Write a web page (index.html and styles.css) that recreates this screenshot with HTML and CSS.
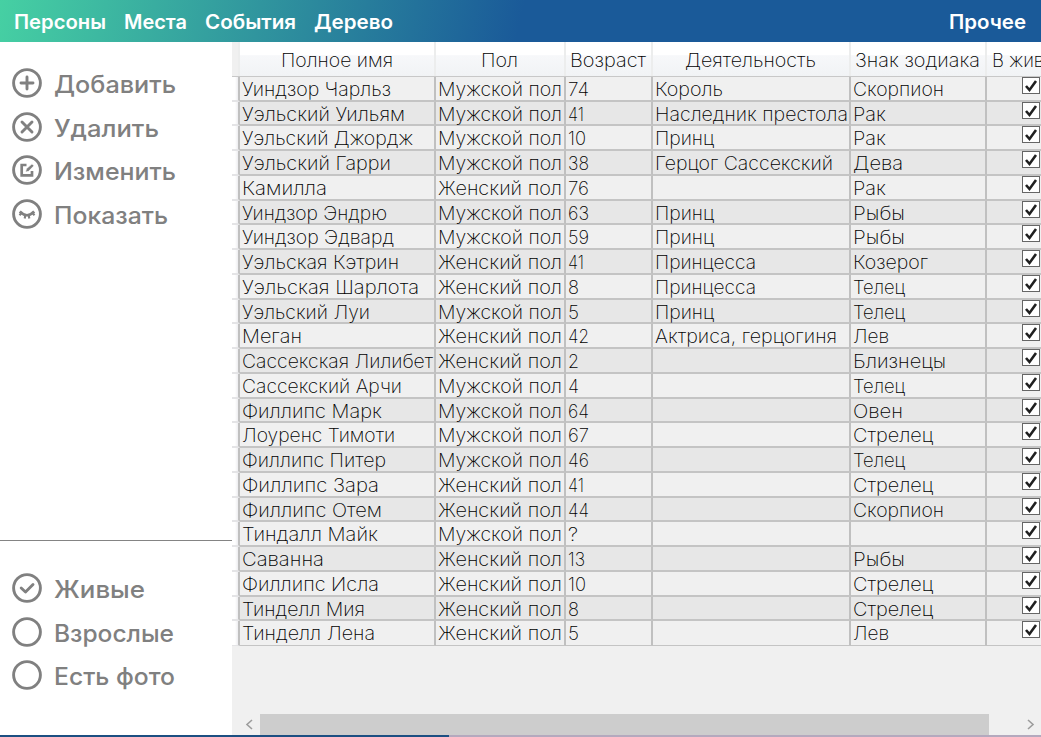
FILE: index.html
```html
<!DOCTYPE html>
<html lang="ru">
<head>
<meta charset="utf-8">
<title>Персоны</title>
<link rel="stylesheet" href="styles.css">
</head>
<body>
<div class="app">
  <nav class="topbar">
    <a class="tab" data-w="92">Персоны</a>
    <a class="tab" data-w="63">Места</a>
    <a class="tab" data-w="91">События</a>
    <a class="tab" data-w="79">Дерево</a>
    <a class="tab tab-more" data-w="77">Прочее</a>
  </nav>
  <div class="main">
    <aside class="side">
      <div class="group actions">
        <div class="item"><svg class="icon" viewBox="0 0 30 30"><circle cx="15" cy="15" r="13.4"/><path d="M15 9v12M9 15h12"/></svg><span class="label" data-w="122">Добавить</span></div>
        <div class="item"><svg class="icon" viewBox="0 0 30 30"><circle cx="15" cy="15" r="13.4"/><path d="M10 10l10 10M20 10l-10 10"/></svg><span class="label" data-w="105">Удалить</span></div>
        <div class="item"><svg class="icon" viewBox="0 0 30 30"><circle cx="15" cy="15" r="13.4"/><path class="edit" d="M14.5 10H9.7v10.3H20V16"/><path class="pen" d="M13.5 17l.8-3.2 5.7-5 2 2-5.3 5.400z"/></svg><span class="label" data-w="122">Изменить</span></div>
        <div class="item"><svg class="icon" viewBox="0 0 30 30"><circle cx="15" cy="15" r="13.4"/><path class="edit" d="M7.8 12.500q7.200 7.500 14.400 0"/><path class="lash" d="M9.500 14l-2 2.300M13.300 16l-.6 3.500M16.700 16l.6 3.500M20.500 14l2 2.300"/></svg><span class="label" data-w="114">Показать</span></div>
      </div>
      <div class="group filters">
        <div class="item"><svg class="icon" viewBox="0 0 30 30"><circle cx="15" cy="15" r="13.4"/><path d="M9.2 15l4.300 4 7.500-7.500"/></svg><span class="label" data-w="91">Живые</span></div>
        <div class="item"><svg class="icon" viewBox="0 0 30 30"><circle cx="15" cy="15" r="13.4"/></svg><span class="label" data-w="120">Взрослые</span></div>
        <div class="item"><svg class="icon" viewBox="0 0 30 30"><circle cx="15" cy="15" r="13.4"/></svg><span class="label" data-w="121">Есть фото</span></div>
      </div>
    </aside>
    <section class="table-pane">
      <div class="row head">
        <div class="cell stub"></div>
        <div class="cell"><span data-w="112">Полное имя</span></div>
        <div class="cell"><span data-w="37">Пол</span></div>
        <div class="cell"><span data-w="76">Возраст</span></div>
        <div class="cell"><span data-w="131">Деятельность</span></div>
        <div class="cell"><span data-w="125">Знак зодиака</span></div>
        <div class="cell alive"><span data-w="74">В живых</span></div>
      </div>
      <div class="rows" id="rows"></div>
      <div class="scrollbar">
        <svg class="arrow" viewBox="0 0 20 21"><path d="M12 6l-5 4.500 5 4.500"/></svg>
        <div class="track"><div class="thumb"></div></div>
        <svg class="arrow" viewBox="0 0 20 21"><path d="M7 6l5 4.500-5 4.500"/></svg>
      </div>
    </section>
  </div>
  <footer class="progress"><div class="progress-done"></div></footer>
</div>
<script src="app.js"></script>
</body>
</html>
```
FILE: styles.css
```css
* { box-sizing: border-box; }
body { margin: 0; overflow: hidden; background: #fff; font-family: "Inter", "Open Sans", sans-serif; }
.app { width: 1041px; height: 737px; display: flex; flex-direction: column; overflow: hidden; }
.topbar { height: 42px; flex: none; display: flex; align-items: center; gap: 18px; padding: 2px 15px 0 14px; background: linear-gradient(102deg, #46d0a3 0, #1a5a99 50%, #1a5a99 100%); }
.tab { color: #fff; font-size: 20px; font-weight: 600; line-height: 28px; white-space: nowrap; }
.tab-more { margin-left: auto; }
[data-w] { display: inline-block; flex: none; transform-origin: 0 50%; }
.main { flex: 1; min-height: 0; display: flex; }
.side { width: 232px; flex: none; display: flex; flex-direction: column; background: #fff; }
.group { display: flex; flex-direction: column; padding-left: 12px; }
.actions { height: 499px; padding-top: 19px; border-bottom: 1px solid #848484; }
.filters { padding-top: 25px; }
.item { height: 43.8px; display: flex; align-items: center; gap: 11.5px; }
.icon { width: 30px; height: 30px; flex: none; fill: none; stroke: #808080; stroke-width: 2.9; stroke-linecap: round; stroke-linejoin: round; }
.icon .edit { stroke-width: 2.7; stroke-linecap: butt; stroke-linejoin: miter; }
.icon .pen { fill: #808080; stroke: #fff; stroke-width: .8; }
.icon .lash { stroke-width: 2.1; stroke-linecap: butt; }
.label { color: #808080; font-size: 24px; font-weight: 450; line-height: 30px; padding-top: 4px; white-space: nowrap; }
.table-pane { flex: 1; min-width: 0; display: flex; flex-direction: column; background: #f0f0f0; overflow: hidden; }
.row { display: grid; grid-template-columns: 8px 196px 130px 87px 198px 136px 120px; grid-template-rows: minmax(0, 1fr); min-height: 0; }
.cell { border-right: 2px solid #c0c0c0; color: #000; font-size: 19px; font-weight: 250; white-space: nowrap; min-width: 0; min-height: 0; }
.head { height: 35px; flex: none; border-bottom: 1px solid #c8c8c8; }
.head .cell { display: flex; align-items: center; justify-content: center; padding-top: 3px; border-right-color: #eceded; background: linear-gradient(#fff 38%, #f7f8fa 40%, #f1f3f5); }
.head .cell:not(.alive) [data-w] { margin-left: -1px; }
.head .alive { justify-content: flex-start; padding-left: 5px; }
.head .stub { background: #f0f0f0; }
.rows { height: 569px; flex: none; display: grid; grid-template-rows: repeat(23, minmax(0, 1fr)); }
.rows .cell { padding-left: 2px; line-height: 25px; border-bottom: 2px solid #c4c4c4; }
.rows .row:last-child .cell { border-bottom-width: 1px; }
.rows .row:nth-child(even) .cell { background: #e7e7e7; }
.rows [data-w] { margin-left: -.5px; }
.rows .row .cell.stub { background: linear-gradient(90deg, #fff 50%, #ededf0); border-bottom-color: #e4e4e6; }
.check { display: block; width: 18px; height: 17px; margin-left: 33px; }
.check rect { fill: #fff; stroke: #666; stroke-width: 1; }
.check path { fill: none; stroke: #202020; stroke-width: 2.6; }
.scrollbar { height: 21px; margin-top: auto; display: flex; padding-left: 8px; flex: none; }
.arrow { width: 20px; height: 21px; fill: none; stroke: #9c9c9c; stroke-width: 1.6; }
.track { flex: 1; }
.thumb { width: 729px; height: 21px; background: #cdcdcd; }
.progress { height: 2px; flex: none; background: #b4a9be; }
.progress-done { width: 449px; height: 2px; background: #1c4f82; }
```
FILE: app.js
```js
const M = ["Мужской пол", 124], F = ["Женский пол", 124];
const jobs = { "Король": 68, "Наследник престола": 193, "Принц": 59, "Герцог Сассекский": 178, "Принцесса": 101, "Актриса, герцогиня": 182 };
const signs = { "Скорпион": 91, "Рак": 33, "Дева": 50, "Рыбы": 52, "Козерог": 75, "Телец": 52, "Лев": 36, "Близнецы": 93, "Овен": 50, "Стрелец": 80 };
const people = [
  ["Уиндзор Чарльз", 149, M, "74", "Король", "Скорпион"],
  ["Уэльский Уильям", 163, M, "41", "Наследник престола", "Рак"],
  ["Уэльский Джордж", 171, M, "10", "Принц", "Рак"],
  ["Уэльский Гарри", 149, M, "38", "Герцог Сассекский", "Дева"],
  ["Камилла", 85, F, "76", "", "Рак"],
  ["Уиндзор Эндрю", 145, M, "63", "Принц", "Рыбы"],
  ["Уиндзор Эдвард", 152, M, "59", "Принц", "Рыбы"],
  ["Уэльская Кэтрин", 157, F, "41", "Принцесса", "Козерог"],
  ["Уэльская Шарлота", 177, F, "8", "Принцесса", "Телец"],
  ["Уэльский Луи", 128, M, "5", "Принц", "Телец"],
  ["Меган", 60, F, "42", "Актриса, герцогиня", "Лев"],
  ["Сассекская Лилибет", 191, F, "2", "", "Близнецы"],
  ["Сассекский Арчи", 160, M, "4", "", "Телец"],
  ["Филлипс Марк", 140, M, "64", "", "Овен"],
  ["Лоуренс Тимоти", 153, M, "67", "", "Стрелец"],
  ["Филлипс Питер", 144, M, "46", "", "Телец"],
  ["Филлипс Зара", 137, F, "41", "", "Стрелец"],
  ["Филлипс Отем", 140, F, "44", "", "Скорпион"],
  ["Тиндалл Майк", 136, M, "?", "", ""],
  ["Саванна", 82, F, "13", "", "Рыбы"],
  ["Филлипс Исла", 137, F, "10", "", "Стрелец"],
  ["Тинделл Мия", 123, F, "8", "", "Стрелец"],
  ["Тинделл Лена", 133, F, "5", "", "Лев"]
];
const ageWidths = { "10": 18, "13": 17, "41": 16, "?": 10 };
const cell = (text, width) => `<div class="cell">${text ? `<span data-w="${width}">${text}</span>` : ""}</div>`;
document.getElementById("rows").innerHTML = people.map(([name, width, sex, age, job, sign]) =>
  `<div class="row"><div class="cell stub"></div>${cell(name, width)}${cell(...sex)}${cell(age, ageWidths[age] || (age.length > 1 ? 21 : 11))}${cell(job, jobs[job])}${cell(sign, signs[sign])}<div class="cell"><svg class="check" viewBox="0 0 18 17"><rect x=".5" y=".5" width="17" height="16"/><path d="M4 9l3.5 4L14 4"/></svg></div></div>`
).join("");

// Stretch every label to its own width.
document.querySelectorAll("[data-w]").forEach(el => {
  const target = Number(el.dataset.w);
  const scale = target / el.getBoundingClientRect().width;
  el.style.width = target + "px";
  el.style.transform = `scaleX(${scale})`;
});
```
